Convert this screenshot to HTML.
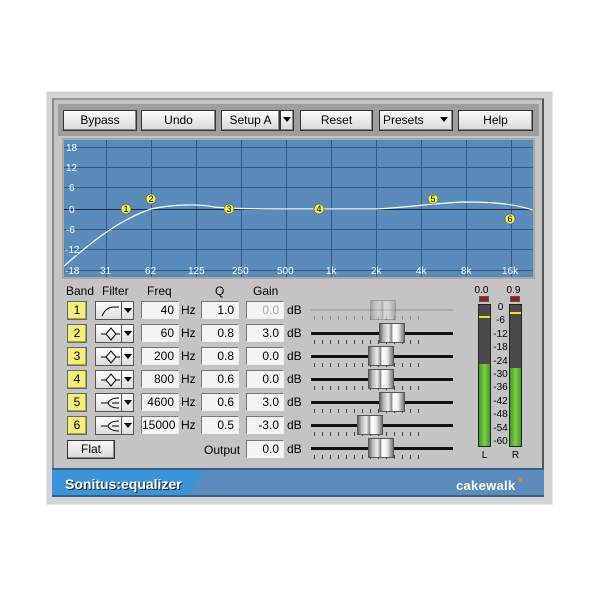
<!DOCTYPE html><html><head><style>
body{margin:0;width:600px;height:600px;background:#fff;position:relative;overflow:hidden;font-family:"Liberation Sans",Arial,sans-serif;}
div{position:absolute;box-sizing:border-box}
.btn{height:21px;top:110px;background:linear-gradient(#fafafa,#d8d8d8);border:1px solid #333;box-shadow:inset -1px -1px 0 #888;font-size:12px;text-align:center;line-height:19px;color:#000}
.box{height:18px;background:#f4f4f4;border:1px solid #777;border-right-color:#eee;border-bottom-color:#eee;font-size:12px;text-align:right;padding-right:4px;line-height:16px}
.lbl{font-size:12px;line-height:14px}
.band{left:67px;width:20px;height:19px;background:#f2f07a;border:1px solid #666;box-shadow:inset -1px -1px 0 #a9a640;font-size:12px;text-align:center;line-height:17px}
.flt{left:95px;width:39px;height:19px;background:linear-gradient(#fff,#ddd);border:1px solid #555}
.flt .dd{left:25px;top:0;width:12px;height:17px;border-left:1px solid #555}
.dd:after{content:"";position:absolute;left:2px;top:6px;border:4px solid transparent;border-top:5px solid #000}
.trk{left:311px;width:142px;height:3px;background:#111}
.tk{left:314px;width:110px;height:4px;background:repeating-linear-gradient(90deg,#444 0 1px,transparent 1px 8px)}
.th{width:26px;height:20px;background:linear-gradient(90deg,#666,#bbb 15%,#eee 35%,#888 48%,#fff 55%,#eee 75%,#777);border:1px solid #555}
.ml{font-size:10px;left:492px;width:17px;text-align:center;line-height:10px}
.st{position:absolute;font-weight:bold;color:#fff;white-space:nowrap}
</style></head><body>
<div style="left:46px;top:91px;width:507px;height:414px;background:#d4d4d4;border:1px solid #e8e8e8"></div>
<div style="left:52px;top:98px;width:492px;height:372px;background:#c4c4c4;border:2px solid #8a8a8a;border-right-color:#555;border-top-color:#999"></div>
<div style="left:58px;top:104px;width:481px;height:32px;background:#9e9e9e"></div>
<div class="btn" style="left:63px;width:74px">Bypass</div>
<div class="btn" style="left:141px;width:75px">Undo</div>
<div class="btn" style="left:221px;width:59px">Setup A</div>
<div class="btn" style="left:280px;width:14px"><div class="dd" style="left:0;top:0;width:12px;height:19px"></div></div>
<div class="btn" style="left:300px;width:73px">Reset</div>
<div class="btn" style="left:379px;width:74px;text-align:left;padding-left:3px">Presets<div class="dd" style="left:58px;top:0;width:12px;height:19px"></div></div>
<div class="btn" style="left:458px;width:75px">Help</div>
<div style="left:62px;top:138px;width:473px;height:141px;background:#a8a8a8"></div>
<svg style="position:absolute;left:64px;top:140px" width="469" height="137">
<rect width="469" height="137" fill="#5a8cbb"/>
<g stroke="#2f5a85" stroke-width="1">
<line x1="0" y1="7.5" x2="469" y2="7.5"/><line x1="0" y1="27.5" x2="469" y2="27.5"/><line x1="0" y1="47.5" x2="469" y2="47.5"/>
<line x1="0" y1="89.5" x2="469" y2="89.5"/><line x1="0" y1="109.5" x2="469" y2="109.5"/><line x1="0" y1="130.5" x2="469" y2="130.5"/>
<line x1="42.5" y1="0" x2="42.5" y2="137"/><line x1="87.5" y1="0" x2="87.5" y2="137"/><line x1="132.5" y1="0" x2="132.5" y2="137"/><line x1="177.5" y1="0" x2="177.5" y2="137"/><line x1="222.5" y1="0" x2="222.5" y2="137"/><line x1="267.5" y1="0" x2="267.5" y2="137"/><line x1="312.5" y1="0" x2="312.5" y2="137"/><line x1="357.5" y1="0" x2="357.5" y2="137"/><line x1="402.5" y1="0" x2="402.5" y2="137"/><line x1="447.5" y1="0" x2="447.5" y2="137"/>
</g>
<line x1="0" y1="69.5" x2="469" y2="69.5" stroke="#1a2a40"/>
<g font-size="10" fill="#fff" font-family="Liberation Sans">
<text x="2" y="11">18</text><text x="2" y="31">12</text><text x="5" y="51">6</text><text x="5" y="73">0</text><text x="2" y="93">-6</text><text x="1" y="113">-12</text><text x="1" y="134">-18</text>
<text x="36" y="134">31</text><text x="81" y="134">62</text><text x="124" y="134">125</text><text x="168" y="134">250</text><text x="213" y="134">500</text><text x="262" y="134">1k</text><text x="307" y="134">2k</text><text x="352" y="134">4k</text><text x="397" y="134">8k</text><text x="438" y="134">16k</text>
</g>
<path d="M0,126 C30,100 55,80 87,69 C110,64 135,64 150,67 C170,69 200,69 220,69 L310,69 C340,68 370,63 400,62 C430,62 450,64 469,70" fill="none" stroke="#fff" stroke-width="1.2"/>
<g font-size="9" font-family="Liberation Sans" text-anchor="middle">
<circle cx="62" cy="69" r="5" fill="#f4f04a" stroke="#333" stroke-width=".5"/><text x="62" y="72">1</text>
<circle cx="87" cy="59" r="5" fill="#f4f04a" stroke="#333" stroke-width=".5"/><text x="87" y="62">2</text>
<circle cx="165" cy="69" r="5" fill="#f4f04a" stroke="#333" stroke-width=".5"/><text x="165" y="72">3</text>
<circle cx="255" cy="69" r="5" fill="#f4f04a" stroke="#333" stroke-width=".5"/><text x="255" y="72">4</text>
<circle cx="369" cy="59" r="5" fill="#f4f04a" stroke="#333" stroke-width=".5"/><text x="369" y="62">5</text>
<circle cx="446" cy="79" r="5" fill="#f4f04a" stroke="#333" stroke-width=".5"/><text x="446" y="82">6</text>
</g></svg>
<div class="lbl" style="left:66px;top:284px">Band</div><div class="lbl" style="left:102px;top:284px">Filter</div><div class="lbl" style="left:147px;top:284px">Freq</div><div class="lbl" style="left:215px;top:284px">Q</div><div class="lbl" style="left:253px;top:284px">Gain</div>

<div class="band" style="top:301px">1</div><div class="flt" style="top:301px"><svg style="position:absolute;left:4px;top:3px" width="20" height="12"><path d="M2,11 Q6,2 14,2 L19,2" fill="none" stroke="#000"/></svg><div class="dd"></div></div>
<div class="box" style="left:141px;top:301px;width:38px">40</div><div class="lbl" style="left:181px;top:303px">Hz</div><div class="box" style="left:201px;top:301px;width:38px">1.0</div><div class="box" style="left:246px;top:301px;width:38px;color:#aaa">0.0</div><div class="lbl" style="left:287px;top:303px">dB</div>
<div class="band" style="top:324px">2</div><div class="flt" style="top:324px"><svg style="position:absolute;left:4px;top:2px" width="20" height="14"><path d="M1,7 L6,7 L11,1 L16,7 L11,13 L6,7 M16,7 L20,7" fill="none" stroke="#000"/></svg><div class="dd"></div></div>
<div class="box" style="left:141px;top:324px;width:38px">60</div><div class="lbl" style="left:181px;top:326px">Hz</div><div class="box" style="left:201px;top:324px;width:38px">0.8</div><div class="box" style="left:246px;top:324px;width:38px">3.0</div><div class="lbl" style="left:287px;top:326px">dB</div>
<div class="band" style="top:347px">3</div><div class="flt" style="top:347px"><svg style="position:absolute;left:4px;top:2px" width="20" height="14"><path d="M1,7 L6,7 L11,1 L16,7 L11,13 L6,7 M16,7 L20,7" fill="none" stroke="#000"/></svg><div class="dd"></div></div>
<div class="box" style="left:141px;top:347px;width:38px">200</div><div class="lbl" style="left:181px;top:349px">Hz</div><div class="box" style="left:201px;top:347px;width:38px">0.8</div><div class="box" style="left:246px;top:347px;width:38px">0.0</div><div class="lbl" style="left:287px;top:349px">dB</div>
<div class="band" style="top:370px">4</div><div class="flt" style="top:370px"><svg style="position:absolute;left:4px;top:2px" width="20" height="14"><path d="M1,7 L6,7 L11,1 L16,7 L11,13 L6,7 M16,7 L20,7" fill="none" stroke="#000"/></svg><div class="dd"></div></div>
<div class="box" style="left:141px;top:370px;width:38px">800</div><div class="lbl" style="left:181px;top:372px">Hz</div><div class="box" style="left:201px;top:370px;width:38px">0.6</div><div class="box" style="left:246px;top:370px;width:38px">0.0</div><div class="lbl" style="left:287px;top:372px">dB</div>
<div class="band" style="top:393px">5</div><div class="flt" style="top:393px"><svg style="position:absolute;left:4px;top:2px" width="20" height="14"><path d="M1,7 L8,7 M19,2 Q10,2 8,7 Q10,12 19,12 M12,7 L19,7" fill="none" stroke="#000"/></svg><div class="dd"></div></div>
<div class="box" style="left:141px;top:393px;width:38px">4600</div><div class="lbl" style="left:181px;top:395px">Hz</div><div class="box" style="left:201px;top:393px;width:38px">0.6</div><div class="box" style="left:246px;top:393px;width:38px">3.0</div><div class="lbl" style="left:287px;top:395px">dB</div>
<div class="band" style="top:416px">6</div><div class="flt" style="top:416px"><svg style="position:absolute;left:4px;top:2px" width="20" height="14"><path d="M1,7 L8,7 M19,2 Q10,2 8,7 Q10,12 19,12 M12,7 L19,7" fill="none" stroke="#000"/></svg><div class="dd"></div></div>
<div class="box" style="left:141px;top:416px;width:38px">15000</div><div class="lbl" style="left:181px;top:418px">Hz</div><div class="box" style="left:201px;top:416px;width:38px">0.5</div><div class="box" style="left:246px;top:416px;width:38px">-3.0</div><div class="lbl" style="left:287px;top:418px">dB</div>

<div class="btn" style="left:67px;top:440px;width:48px;height:19px;line-height:17px">Flat</div>
<div class="lbl" style="left:204px;top:443px">Output</div><div class="box" style="left:246px;top:440px;width:38px">0.0</div><div class="lbl" style="left:287px;top:442px">dB</div>

<div class="trk" style="top:309px;background:#aaa;height:2px"></div><div class="tk" style="top:316px;opacity:.4"></div><div class="th" style="left:370px;top:300px;opacity:.35"></div>
<div class="trk" style="top:332px"></div><div class="tk" style="top:340px"></div><div class="th" style="left:379px;top:323px"></div>
<div class="trk" style="top:355px"></div><div class="tk" style="top:363px"></div><div class="th" style="left:368px;top:346px"></div>
<div class="trk" style="top:378px"></div><div class="tk" style="top:386px"></div><div class="th" style="left:368px;top:369px"></div>
<div class="trk" style="top:401px"></div><div class="tk" style="top:409px"></div><div class="th" style="left:379px;top:392px"></div>
<div class="trk" style="top:424px"></div><div class="tk" style="top:432px"></div><div class="th" style="left:357px;top:415px"></div>
<div class="trk" style="top:447px"></div><div class="tk" style="top:455px"></div><div class="th" style="left:368px;top:438px"></div>

<div class="ml" style="left:473px;top:286px">0.0</div><div class="ml" style="left:505px;top:286px">0.9</div>
<div style="left:479px;top:296px;width:10px;height:6px;background:#a01818;border:1px solid #555"></div>
<div style="left:510px;top:296px;width:10px;height:6px;background:#a01818;border:1px solid #555"></div>
<div style="left:478px;top:304px;width:13px;height:143px;background:#4a4a4a;border:1px solid #222"></div>
<div style="left:479px;top:364px;width:11px;height:82px;background:linear-gradient(90deg,#3e9a24,#7fd04a,#3e9a24)"></div>
<div style="left:479px;top:316px;width:11px;height:2px;background:#f0e020"></div>
<div style="left:509px;top:304px;width:13px;height:143px;background:#4a4a4a;border:1px solid #222"></div>
<div style="left:510px;top:368px;width:11px;height:78px;background:linear-gradient(90deg,#3e9a24,#7fd04a,#3e9a24)"></div>
<div style="left:510px;top:312px;width:11px;height:2px;background:#f0e020"></div>
<div class="ml" style="top:303px">0</div><div class="ml" style="top:316px">-6</div><div class="ml" style="top:330px">-12</div><div class="ml" style="top:343px">-18</div><div class="ml" style="top:357px">-24</div><div class="ml" style="top:370px">-30</div><div class="ml" style="top:383px">-36</div><div class="ml" style="top:397px">-42</div><div class="ml" style="top:410px">-48</div><div class="ml" style="top:424px">-54</div><div class="ml" style="top:437px">-60</div>
<div class="ml" style="left:476px;top:451px">L</div><div class="ml" style="left:507px;top:451px">R</div>

<svg style="position:absolute;left:52px;top:468px" width="492" height="29">
<rect width="492" height="29" fill="#5b8cbc"/><rect y="0" width="492" height="2" fill="#3a5f85"/>
<path d="M0,2 L158,2 Q148,5 145,15 Q140,27 132,27 L0,27Z" fill="#3b94d8"/>
<rect y="27" width="492" height="2" fill="#3a5f85"/>
<rect x="467" y="10" width="3" height="4" fill="#e08030"/>
</svg>
<div class="st" style="left:65px;top:476px;font-size:14px;text-shadow:1px 1px 0 #123">Sonitus:equalizer</div>
<div class="st" style="left:456px;top:478px;font-size:13px;letter-spacing:0.3px">cakewalk</div>
</body></html>
